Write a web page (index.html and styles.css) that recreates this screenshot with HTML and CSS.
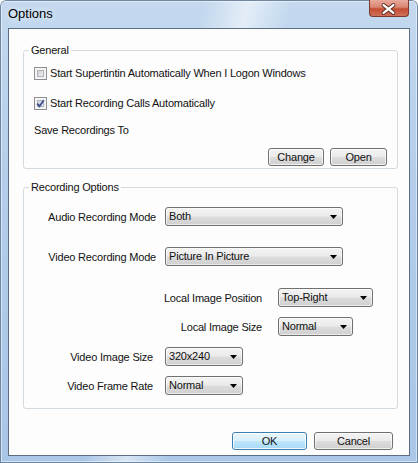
FILE: index.html
```html
<!DOCTYPE html>
<html>
<head>
<meta charset="utf-8">
<title>Options</title>
<link rel="stylesheet" href="styles.css">
</head>
<body>
<div class="window">
  <div class="titlebar">
    <span class="title">Options</span>
    <div class="close">
      <svg width="40" height="17" viewBox="0 0 40 17">
        <path d="M15 5 L25 13 M25 5 L15 13" stroke="#5b2a22" stroke-width="4.2" stroke-linecap="round" fill="none"/>
        <path d="M15 5 L25 13 M25 5 L15 13" stroke="#ffffff" stroke-width="2.4" stroke-linecap="round" fill="none"/>
      </svg>
    </div>
  </div>
  <div class="client">
    <fieldset class="group group-general">
      <legend>General</legend>
      <div class="general-body">
        <div class="check-row">
          <span class="cb"><span class="cb-in"></span></span>
          <span>Start Supertintin Automatically When I Logon Windows</span>
        </div>
        <div class="check-row check-row-2">
          <span class="cb checked">
            <span class="cb-in"></span>
            <svg class="tick" width="9" height="9" viewBox="0 0 9 9"><path d="M1.2 4.6 L3.5 7.2 L7.8 1.2" stroke="#3b4f8f" stroke-width="1.8" fill="none"/></svg>
          </span>
          <span>Start Recording Calls Automatically</span>
        </div>
        <div class="save-row">Save Recordings To</div>
        <div class="btn-row">
          <button class="btn btn-change">Change</button>
          <button class="btn btn-open">Open</button>
        </div>
      </div>
    </fieldset>
    <fieldset class="group group-recording">
      <legend>Recording Options</legend>
      <div class="rec-body">
        <div class="field field-a row-1">
          <span class="lbl">Audio Recording Mode</span>
          <div class="combo combo-wide"><span>Both</span><svg width="7" height="4" viewBox="0 0 7 4"><path d="M0 0 H7 L3.5 4 Z" fill="#000"/></svg></div>
        </div>
        <div class="field field-a row-2">
          <span class="lbl">Video Recording Mode</span>
          <div class="combo combo-wide"><span>Picture In Picture</span><svg width="7" height="4" viewBox="0 0 7 4"><path d="M0 0 H7 L3.5 4 Z" fill="#000"/></svg></div>
        </div>
        <div class="field field-b row-3">
          <span class="lbl">Local Image Position</span>
          <div class="combo combo-pos"><span>Top-Right</span><svg width="7" height="4" viewBox="0 0 7 4"><path d="M0 0 H7 L3.5 4 Z" fill="#000"/></svg></div>
        </div>
        <div class="field field-b row-4">
          <span class="lbl">Local Image Size</span>
          <div class="combo combo-size"><span>Normal</span><svg width="7" height="4" viewBox="0 0 7 4"><path d="M0 0 H7 L3.5 4 Z" fill="#000"/></svg></div>
        </div>
        <div class="field field-c row-5">
          <span class="lbl">Video Image Size</span>
          <div class="combo combo-small"><span>320x240</span><svg width="7" height="4" viewBox="0 0 7 4"><path d="M0 0 H7 L3.5 4 Z" fill="#000"/></svg></div>
        </div>
        <div class="field field-c row-6">
          <span class="lbl">Video Frame Rate</span>
          <div class="combo combo-small"><span>Normal</span><svg width="7" height="4" viewBox="0 0 7 4"><path d="M0 0 H7 L3.5 4 Z" fill="#000"/></svg></div>
        </div>
      </div>
    </fieldset>
    <div class="dialog-buttons">
      <button class="btn btn-ok">OK</button>
      <button class="btn btn-cancel">Cancel</button>
    </div>
  </div>
</div>
</body>
</html>
```

FILE: styles.css
```css
html, body {
  margin: 0;
  padding: 0;
  background: #ffffff;
}

.window {
  width: 418px;
  height: 463px;
  box-sizing: border-box;
  display: flex;
  flex-direction: column;
  border-radius: 6px 6px 0 0;
  background:
    linear-gradient(105deg, rgba(255,255,255,0) 0%, rgba(255,255,255,0) 38%, rgba(255,255,255,0.55) 46%, rgba(255,255,255,0) 54%, rgba(255,255,255,0) 100%),
    linear-gradient(180deg, #c4d9ef 0%, #b3cdea 40%, #a9c6e7 100%);
  box-shadow: inset 0 0 0 1px #6f86a0, inset 0 0 0 2px rgba(255,255,255,0.5);
  font-family: "Liberation Sans", Arial, sans-serif;
  font-size: 11px;
  letter-spacing: -0.2px;
  color: #111;
}

.titlebar {
  height: 28px;
  display: flex;
  align-items: flex-start;
  justify-content: space-between;
  flex-shrink: 0;
}

.title {
  font-size: 13px;
  letter-spacing: 0;
  margin: 6px 0 0 8px;
  line-height: 15px;
  color: #000;
  text-shadow: 0 0 6px rgba(255,255,255,0.9);
}

.close {
  width: 40px;
  height: 17px;
  margin-right: 9px;
  box-sizing: border-box;
  border: 1px solid #7a3a30;
  border-top: none;
  border-radius: 0 0 4px 4px;
  background: linear-gradient(180deg, #e9aa9c 0%, #d98572 45%, #c44d34 55%, #d0705a 100%);
  display: flex;
  overflow: hidden;
}

.close svg {
  display: block;
  margin-left: -1px;
}

.client {
  margin: 0 8px;
  height: 428px;
  box-sizing: border-box;
  border: 1px solid #5b6d80;
  background: #fdfdfd;
  display: flex;
  flex-direction: column;
}

.group {
  margin: 0 11px 0 14px;
  padding: 0;
  border: 1px solid #d3dadf;
  border-radius: 3px;
  min-width: 0;
}

.group legend {
  margin-left: 5px;
  padding: 0 2px;
  line-height: 14px;
  font-size: 11px;
  color: #111;
}

.group-general {
  margin-top: 14px;
}

.general-body {
  padding: 8px 10px 2px 10px;
  display: flex;
  flex-direction: column;
}

.check-row {
  display: flex;
  align-items: center;
  height: 16px;
  line-height: 16px;
}

.check-row-2 {
  margin-top: 14px;
}

.cb {
  position: relative;
  width: 13px;
  height: 13px;
  box-sizing: border-box;
  border: 1px solid #8f8f8f;
  background: #f4f4f4;
  padding: 2px;
  margin-right: 3px;
  flex-shrink: 0;
}

.cb-in {
  display: block;
  width: 100%;
  height: 100%;
  box-sizing: border-box;
  border: 1px solid #aeb3b9;
  background: linear-gradient(135deg, #cdd1d6 0%, #eef0f1 100%);
}

.tick {
  position: absolute;
  left: 1px;
  top: 1px;
}

.save-row {
  margin-top: 11px;
  height: 16px;
  line-height: 16px;
}

.btn-row {
  margin-top: 10px;
  display: flex;
  justify-content: flex-end;
  gap: 6px;
}

.btn {
  font-family: "Liberation Sans", Arial, sans-serif;
  font-size: 11px;
  letter-spacing: -0.2px;
  color: #111;
  height: 18px;
  padding: 0;
  box-sizing: border-box;
  border: 1px solid #707070;
  border-radius: 3px;
  background: linear-gradient(180deg, #f3f3f3 0%, #ebebeb 48%, #dddddd 52%, #cfcfcf 100%);
  box-shadow: inset 0 0 0 1px rgba(255,255,255,0.7);
  line-height: 16px;
  text-align: center;
}

.btn-change { width: 56px; }
.btn-open { width: 57px; }

.group-recording {
  margin-top: 11px;
}

.rec-body {
  padding: 13px 0 13px 0;
  display: flex;
  flex-direction: column;
}

.field {
  display: flex;
  align-items: center;
  height: 19px;
}

.lbl {
  text-align: right;
  flex-shrink: 0;
}

.field-a .lbl { width: 132px; margin-right: 9px; }
.field-b .lbl { width: 238px; margin-right: 16px; }
.field-c .lbl { width: 129px; margin-right: 12px; }

.row-2 { margin-top: 21px; }
.row-3 { margin-top: 22px; }
.row-4 { margin-top: 10px; }
.row-5 { margin-top: 11px; }
.row-6 { margin-top: 10px; }

.combo {
  height: 19px;
  box-sizing: border-box;
  border: 1px solid #707070;
  border-radius: 3px;
  background: linear-gradient(180deg, #f3f3f3 0%, #ebebeb 48%, #dddddd 52%, #cfcfcf 100%);
  box-shadow: inset 0 0 0 1px rgba(255,255,255,0.6);
  display: flex;
  align-items: center;
  justify-content: space-between;
  padding: 0 5px 0 3px;
  line-height: 15px;
}

.combo svg {
  display: block;
  margin-top: 1px;
}

.combo-wide { width: 178px; }
.combo-pos { width: 95px; }
.combo-size { width: 75px; }
.combo-small { width: 78px; }

.dialog-buttons {
  margin: 23px 16px 0 0;
  display: flex;
  justify-content: flex-end;
  gap: 7px;
}

.btn-ok {
  width: 75px;
  border-color: #3c7fb1;
  background: linear-gradient(180deg, #eaf6fd 0%, #d9f0fc 48%, #bee6fd 52%, #a7d9f5 100%);
  box-shadow: inset 0 0 0 1px rgba(255,255,255,0.8);
}

.btn-cancel { width: 79px; }
```
